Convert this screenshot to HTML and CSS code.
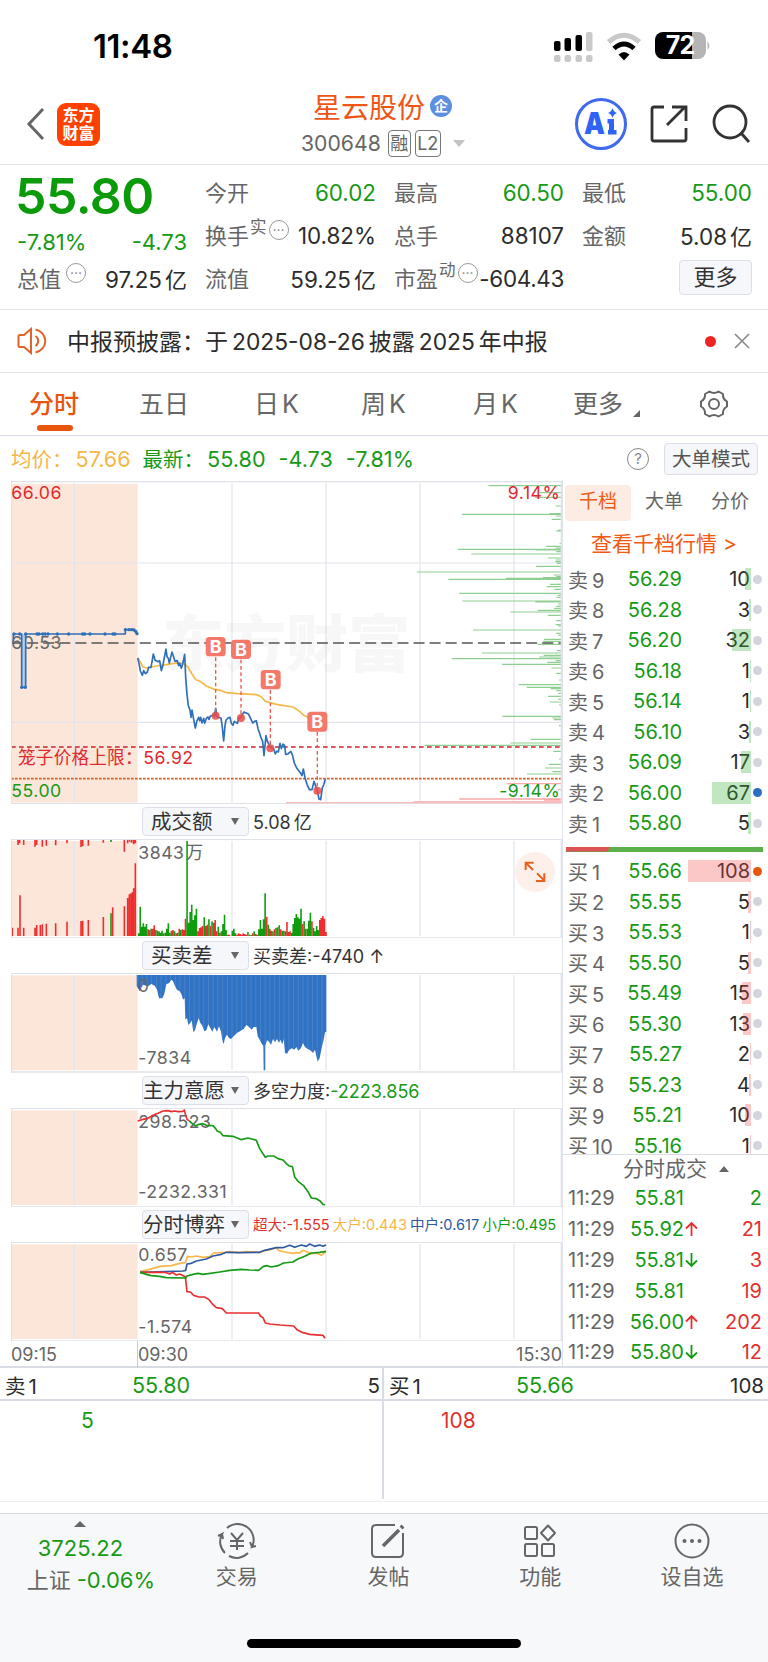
FILE: index.html
```html
<!DOCTYPE html>
<html lang="zh-CN">
<head>
    <meta charset="UTF-8">
    <title>星云股份 300648</title>
    <link rel="stylesheet" href="styles.css">
</head>
<body>
    <div class="status-bar">
        <span class="clock">11:48</span>
        <svg class="status-icons" width="160" height="42" viewBox="0 0 160 42">
            <g fill="#000">
                <rect x="3" y="14" width="6.500" height="10" rx="2"/>
                <rect x="13.500" y="11" width="6.500" height="13" rx="2"/>
                <rect x="24.500" y="8" width="6.500" height="16" rx="2"/>
            </g>
            <g fill="#c9c9c9">
                <rect x="35" y="5" width="6.500" height="19" rx="2"/>
                <rect x="3" y="28" width="6.500" height="7" rx="2"/>
                <rect x="13.500" y="28" width="6.500" height="7" rx="2"/>
                <rect x="24.500" y="28" width="6.500" height="7" rx="2"/>
                <rect x="35" y="28" width="6.500" height="7" rx="2"/>
            </g>
            <path d="M57.500 15 Q73 1.500 88.500 15" fill="none" stroke="#c9c9c9" stroke-width="5"/>
            <path d="M63 21.500 Q73 12.500 83 21.500" fill="none" stroke="#000" stroke-width="5"/>
            <path d="M67.500 27.500 Q73 22.500 78.500 27.500 L73 33.500 Z" fill="#000"/>
            <path d="M112 5h29v27h-29a8 8 0 0 1-8-8v-11a8 8 0 0 1 8-8z" fill="#000"/>
            <path d="M141 5h6a8 8 0 0 1 8 8v11a8 8 0 0 1-8 8h-6z" fill="#b5b5b5"/>
            <path d="M156.500 14q3.500 4.500 0 9z" fill="#b5b5b5"/>
            <text x="129" y="27" class="battery">72</text>
        </svg>
    </div>

    <header class="header">
        <svg class="back" width="20" height="34" viewBox="0 0 20 34"><path d="M17 2 L3 17 L17 32" fill="none" stroke="#666" stroke-width="3"/></svg>
        <div class="logo">东方<br>财富</div>
        <div class="title">
            <div class="stock-name">星云股份<span class="corp">企</span></div>
            <div class="stock-code">300648<span class="tag">融</span><span class="tag tag-l2">L2</span><i class="tri-down"></i></div>
        </div>
        <div class="actions">
            <svg width="54" height="54" viewBox="0 0 54 54">
                <circle cx="27" cy="27" r="24.500" fill="#fff" stroke="#3f69ee" stroke-width="3"/>
                <text x="10" y="37" class="ai-text" textLength="21" lengthAdjust="spacingAndGlyphs">A</text>
                <path d="M33.500 22h6.500v11h2.500v4.500h-8.500v-4.500h1v-6.500h-1.500z" fill="#2f63f5"/>
                <path d="M38.500 11q1 4 4.500 5q-3.500 1-4.500 5q-1-4-4.500-5q3.500-1 4.500-5z" fill="#2f63f5"/>
            </svg>
            <svg class="share" width="38" height="38" viewBox="0 0 38 38" fill="none" stroke="#333" stroke-width="2.800">
                <path d="M14 2H4Q2 2 2 4V34Q2 36 4 36H34Q36 36 36 34V23"/><path d="M17 20L35 2M22 2H36V16"/>
            </svg>
            <svg class="search" width="40" height="40" viewBox="0 0 40 40" fill="none" stroke="#333" stroke-width="2.800">
                <circle cx="18" cy="18" r="16"/><path d="M29 29L37 38"/>
            </svg>
        </div>
    </header>

    <section class="quote">
        <div class="cell big-price">55.80</div>
        <div class="cell"><label>今开</label><b class="green">60.02</b></div>
        <div class="cell"><label>最高</label><b class="green">60.50</b></div>
        <div class="cell"><label>最低</label><b class="green">55.00</b></div>
        <div class="cell change green"><span>-7.81%</span><span>-4.73</span></div>
        <div class="cell"><label>换手<sup>实</sup><i class="dots">···</i></label><b>10.82%</b></div>
        <div class="cell"><label>总手</label><b>88107</b></div>
        <div class="cell"><label>金额</label><b>5.08<em>亿</em></b></div>
        <div class="cell"><label>总值<i class="dots gap">···</i></label><b>97.25<em>亿</em></b></div>
        <div class="cell"><label>流值</label><b>59.25<em>亿</em></b></div>
        <div class="cell"><label>市盈<sup>动</sup><i class="dots">···</i></label><b class="tight">-604.43</b></div>
        <div class="cell more-cell"><button class="more">更多</button></div>
    </section>

    <section class="notice">
        <svg width="32" height="28" viewBox="0 0 32 28" fill="none" stroke="#e0632a" stroke-width="2">
            <path d="M14 2L7 8H3Q1.500 8 1.500 9.500V18.500Q1.500 20 3 20H7L14 26ZM18.500 9a6 6 0 0 1 0 10M18.500 2.500a12 11.700 0 0 1 0 23"/>
        </svg>
        <p>中报预披露：于<span>2025-08-26</span>披露<span>2025</span>年中报</p>
        <i class="red-dot"></i>
        <svg width="16" height="16" viewBox="0 0 16 16" stroke="#888" stroke-width="1.600"><path d="M1 1L15 15M15 1L1 15"/></svg>
    </section>

    <nav class="tabs">
        <span class="active">分时</span><span>五日</span><span>日<em>K</em></span><span>周<em>K</em></span><span>月<em>K</em></span><span class="tab-more">更多</span>
        <svg width="32" height="32" viewBox="0 0 32 32" fill="none" stroke="#666" stroke-width="2">
            <path d="M11.500 3.500Q16 6.500 20.500 3.500L25 6Q24.500 11 29 13.500V18.500Q24.500 21 25 26L20.500 28.500Q16 25.500 11.500 28.500L7 26Q7.500 21 3 18.500V13.500Q7.500 11 7 6Z" stroke-linejoin="round"/><circle cx="16" cy="16" r="5"/>
        </svg>
    </nav>

    <section class="info">
        <span class="yellow">均价：</span><b class="yellow v1">57.66</b>
        <span class="green">最新：</span><b class="green v2">55.80</b><b class="green v3">-4.73</b><b class="green">-7.81%</b>
        <i class="help">?</i>
        <button>大单模式</button>
    </section>

    <main class="board">
        <div class="charts">
            <svg class="chart main-chart" viewBox="34 31 1653 969">
                <rect x="34" y="39" width="380" height="957" class="auction"/>
                <path class="grid" d="M224 37V995M697 37V995M979 37V995M1261 37V995M1543 37V995M34 277H1685M34 755H1685"/>
                <text x="488" y="588" class="watermark">东方财富</text>
                <path id="sellDepth" stroke="#8fce91" stroke-width="3.500"/>
                <path id="buyDepth" stroke="#fba8a8" stroke-width="4"/>
                <path d="M34 517H1685" stroke="#555" stroke-width="5" stroke-dasharray="33 15.300"/>
                <path d="M34 829H1685" stroke="#c9252b" stroke-width="5" stroke-dasharray="14 10"/>
                <path d="M34 924H1685" stroke="#cf6428" stroke-width="5" stroke-dasharray="8 4"/>
                <g class="axis">
                    <text x="35" y="85" fill="#e02a2e">66.06</text>
                    <text x="35" y="534">60.53</text>
                    <text x="35" y="980" fill="#169a16">55.00</text>
                    <text x="1682" y="85" fill="#e02a2e" text-anchor="end">9.14%</text>
                    <text x="1682" y="980" fill="#169a16" text-anchor="end">-9.14%</text>
                    <text x="55" y="881" fill="#e02a2e" class="cage">笼子价格上限：</text>
                    <text x="431" y="881" fill="#e02a2e">56.92</text>
                </g>
                <rect x="66" y="490" width="12" height="160" fill="#b9cfe6"/>
                <path class="blue-line" d="M41 515V490H66V650H78V490H377V477H402L413 490"/>
                <g id="auctionDots" fill="#2f6fb8"></g>
                <path fill="none" stroke="#f2b848" stroke-width="5" d="M414 562L421 572 429 588 440 592 470 586 505 581 530 577 550 578 564 588 577 610 588 627 600 631 620 646 645 656 665 660 680 666 715 669 770 672 785 678 797 692 830 701 880 709 900 722 912 734 935 744 955 752 965 768"/>
                <path class="blue-line" d="M414 562L418 578 422 601 428 614 432 600 437 609 443 604 447 590 454 590 461 550 466 568 475 573 480 570 485 600 490 582 499 535 502 558 506 563 509 577 512 564 517 544 522 559 526 572 533 570 537 585 540 578 545 593 549 580 555 551 558 620 562 671 566 705 571 718 574 740 577 718 582 746 587 772 592 750 597 740 600 750 603 740 607 757 612 743 615 758 620 743 625 739 628 746 632 736 640 734 644 737 648 713 652 738 657 740 664 742 668 770 672 811 676 765 679 748 685 742 691 740 695 758 700 764 704 752 708 755 713 758 719 740 724 742 728 732 733 724 740 727 747 731 753 744 759 757 765 752 770 750 775 774 780 788 784 801 789 812 793 855 799 795 803 812 812 829 822 835 827 850 831 842 836 844 841 818 845 834 850 820 855 825 858 851 864 850 868 847 873 842 878 852 884 877 891 892 898 901 903 908 907 915 911 895 916 921 922 941 929 957 937 957 943 932 948 946 954 965 958 985 963 987 968 951 972 943 977 925"/>
                <g fill="none" stroke="#f0564e" stroke-width="4" stroke-dasharray="11 8">
                    <path d="M648 560V735M724 567V742M812 658V833M953 784V960"/>
                </g>
                <g fill="#e84c48" fill-opacity=".85"><circle cx="648" cy="735" r="12"/><circle cx="724" cy="742" r="12"/><circle cx="812" cy="833" r="12"/><circle cx="953" cy="960" r="12"/></g>
                <g class="marks">
                    <rect x="618" y="499" width="60" height="58" rx="11"/><text x="648" y="547">B</text>
                    <rect x="694" y="507" width="60" height="58" rx="11"/><text x="724" y="555">B</text>
                    <rect x="783" y="598" width="60" height="58" rx="11"/><text x="813" y="646">B</text>
                    <rect x="923" y="723" width="60" height="60" rx="11"/><text x="953" y="772">B</text>
                </g>
                <path class="frame" d="M34 33H1685M35 31V1000M1685 31V1000M34 999H1685"/>
                <path d="M859 996H1685M1242 993H1685" stroke="#f9bcbc" stroke-width="4"/>
            </svg>

            <div class="picker"><button class="pad">成交额</button><span>5.08<em>亿</em></span></div>
            <svg class="chart" viewBox="34 147 1653 298">
                <rect x="34" y="153" width="380" height="285" class="auction"/>
                <path class="grid" d="M224 153V438M697 153V438M979 153V438M1261 153V438M1543 153V438"/>
                <text x="416" y="206" class="label">3843<tspan dx="4">万</tspan></text>
                <path id="volUp" stroke="#ee2e2e" stroke-width="4.800"/>
                <path id="volDown" stroke="#0f9d0f" stroke-width="4.800"/>
                <path class="frame" d="M34 148H1685M34 444H1685M35 148V444M1685 147V445"/>
                <circle cx="1606" cy="246" r="60" fill="#fdf0ea"/>
                <path d="M1600 240L1578 218M1578 240V218H1602M1612 250L1634 272M1634 250V273H1609" fill="none" stroke="#e8611d" stroke-width="6"/>
            </svg>

            <div class="picker"><button class="pad">买卖差</button><span>买卖差:-4740 ↑</span></div>
            <svg class="chart" viewBox="34 550 1653 298">
                <defs><pattern id="bars" width="14.200" height="20" patternUnits="userSpaceOnUse"><rect width="15" height="20" fill="#3073c4"/><rect width="1.500" height="20" fill="#5d8fcb"/></pattern></defs>
                <rect x="34" y="557" width="380" height="285" class="auction"/>
                <path class="grid" d="M224 557V842M697 557V842M979 557V842M1261 557V842M1543 557V842"/>
                <polygon fill="url(#bars)" points="411,556 411,590 420,604 430,585 445,590 455,583 465,588 472,600 478,626 488,626 494,612 500,584 508,580 516,570 520,575 526,590 532,600 540,605 546,615 550,630 555,625 557,690 562,685 566,706 572,700 576,692 581,728 586,722 592,700 597,686 602,700 608,708 614,725 620,722 626,704 632,715 638,726 644,712 652,726 658,710 664,726 668,752 672,764 676,745 682,735 688,745 694,748 702,740 712,730 722,724 732,718 740,706 748,712 756,720 762,712 770,712 774,740 780,750 786,762 791,768 792,842 797,842 797,768 802,752 808,756 814,766 820,748 826,758 832,748 838,760 842,750 848,764 852,748 856,790 862,792 868,782 876,776 884,780 890,772 896,784 904,775 910,760 916,772 924,778 932,782 940,790 946,780 950,800 954,816 960,805 966,775 972,750 976,728 980,726 980,556"/>
                <text x="414" y="608" class="label">0</text>
                <text x="416" y="824" class="label">-7834</text>
                <path class="frame" d="M34 551H1685M34 847H1685M35 551V847M1685 550V848"/>
            </svg>

            <div class="picker"><button>主力意愿</button><span>多空力度:<b class="green">-2223.856</b></span></div>
            <svg class="chart" viewBox="34 83 1653 298">
                <rect x="34" y="90" width="380" height="284" class="auction"/>
                <path class="grid" d="M224 90V374M697 90V374M979 90V374M1261 90V374M1543 90V374"/>
                <text x="416" y="142" class="label">298.523</text>
                <text x="416" y="352" class="label">-2232.331</text>
                <path class="line" stroke="#ea2f31" d="M414 122L430 117 445 114 460 105 475 99 490 92 505 91 515 94 525 92 535 94 550 93 554 89 558 105 562 117 568 121"/>
                <path class="line" stroke="#169a16" d="M568 121L578 130 588 137 598 132 610 130 620 135 640 136 648 145 653 153 662 156 670 166 700 168 725 178 745 173 770 180 780 205 797 231 805 227 822 227 835 235 850 239 860 250 868 257 878 259 885 290 895 303 912 316 926 336 935 353 950 355 960 361 970 372 976 374"/>
                <path class="frame" d="M34 84H1685M34 380H1685M35 84V380M1685 83V381"/>
            </svg>

            <div class="picker"><button>分时博弈</button><span class="small"><i class="c-red">超大:-1.555</i><i class="yellow">大户:0.443</i><i class="c-blue">中户:0.617</i><i class="green">小户:0.495</i></span></div>
            <svg class="chart" viewBox="34 486 1653 298">
                <rect x="34" y="493" width="380" height="284" class="auction"/>
                <path class="grid" d="M224 493V777M697 493V777M979 493V777M1261 493V777M1543 493V777"/>
                <text x="416" y="544" class="label">0.657</text>
                <text x="416" y="760" class="label">-1.574</text>
                <path class="line" stroke="#f7b84a" d="M421 575L450 568 480 559 515 557 540 550 557 548 563 529 575 531 590 528 610 532 630 530 642 519 660 518 675 517 690 515 720 518 740 515 780 517 795 512 815 508 830 503 838 512 855 516 880 520 890 518 900 519 910 511 925 517 935 522 950 519 965 526 979 514"/>
                <path class="line" stroke="#2f59a0" d="M421 577L500 575 550 573 558 571 562 552 575 550 590 543 620 537 640 528 665 523 680 517 720 518 780 517 795 511 830 503 850 503 870 496 885 502 905 495 920 499 930 492 945 499 960 495 970 499 979 495"/>
                <path class="line" stroke="#ea2f31" d="M421 577L495 577 510 582 518 577 530 585 540 582 557 590 562 635 572 636 582 646 598 651 615 651 628 659 640 674 650 683 668 686 680 699 777 699 782 708 790 713 797 729 810 732 840 735 882 738 892 749 910 758 930 763 970 766 976 775"/>
                <path class="line" stroke="#169a16" d="M421 577L440 583 455 587 480 589 500 593 558 594 562 588 580 583 595 580 610 583 660 576 690 571 725 568 750 570 777 571 790 560 800 557 815 561 835 557 852 549 880 546 893 538 915 529 935 519 960 517 979 514"/>
                <path class="frame" d="M34 487H1685M34 783H1685M35 487V783M1685 486V784"/>
            </svg>
            <div class="times"><span class="t1">09:15</span><span class="t2">09:30</span><span class="t3">15:30</span></div>
        </div>

        <aside class="book">
            <div class="book-tabs"><span class="on">千档</span><span>大单</span><span>分价</span></div>
            <a class="link">查看千档行情 &gt;</a>
            <div id="sells"></div>
            <div class="ratio"><i></i></div>
            <div id="buys" class="buys"></div>
            <div class="deal-title">分时成交<i class="tri-up"></i></div>
            <div id="deals"></div>
        </aside>
    </main>

    <section class="level">
        <div class="half">
            <div class="level-head"><span>卖<em>1</em></span><b>55.80</b><span class="num">5</span></div>
            <div class="queue green">5</div>
        </div>
        <div class="half">
            <div class="level-head"><span>买<em>1</em></span><b>55.66</b><span class="num">108</span></div>
            <div class="queue c-red">108</div>
        </div>
    </section>

    <footer class="bottom">
        <div class="index">
            <i class="tri-up"></i>
            <div class="green">3725.22</div>
            <div class="rate">上证<b class="green">-0.06%</b></div>
        </div>
        <div class="item">
            <svg width="40" height="36" viewBox="0 0 40 36" fill="none" stroke="#666" stroke-width="2">
                <path d="M8 30A16 16 0 0 1 5 11L1 13M5 11L6 16M10 5A16 16 0 0 1 35 24L39 23M35 24L33 19M31 30A16 16 0 0 1 12 33"/>
                <path d="M14 10L20 17L26 10M20 17V27M13 18H27M13 23H27"/>
            </svg>
            交易
        </div>
        <div class="item">
            <svg width="36" height="36" viewBox="0 0 36 36" fill="none" stroke="#666" stroke-width="2">
                <path d="M25 2H6Q2 2 2 6V30Q2 34 6 34H29Q33 34 33 30V10"/><path d="M13 23L29 7" stroke-width="3.500"/><path d="M31 5L33 3" stroke-width="4"/>
            </svg>
            发帖
        </div>
        <div class="item">
            <svg width="36" height="36" viewBox="0 0 36 36" fill="none" stroke="#666" stroke-width="2">
                <rect x="3" y="4" width="12" height="12" rx="1.500"/><rect x="3" y="21" width="12" height="12" rx="1.500"/><rect x="20" y="21" width="12" height="12" rx="1.500"/><path d="M26 2.500L33 10L26 17.500L19 10Z" stroke-linejoin="round"/>
            </svg>
            功能
        </div>
        <div class="item">
            <svg width="36" height="36" viewBox="0 0 36 36" fill="none" stroke="#666" stroke-width="2">
                <circle cx="18" cy="18" r="16.500"/><g fill="#666" stroke="none"><circle cx="10.500" cy="18" r="2"/><circle cx="18" cy="18" r="2"/><circle cx="25.500" cy="18" r="2"/></g>
            </svg>
            设自选
        </div>
        <i class="home-bar"></i>
    </footer>
    <script src="script.js"></script>
</body>
</html>
```
FILE: styles.css
```css
* {
    box-sizing: border-box;
}

body {
    margin: 0;
    width: 768px;
    height: 1662px;
    overflow: hidden;
    background: #fff;
    color: #2b2b2b;
    font-family: Inter, "Noto Sans CJK SC", sans-serif;
    font-size: 22px;
}

i, em {
    font-style: normal;
}

b {
    font-weight: 400;
}

button {
    font-family: inherit;
    color: #333;
    background: #f6f7fa;
    border: 1px solid #dcdfe8;
    border-radius: 4px;
    padding: 0;
}

.green { color: #169a16; }
.yellow { color: #f5b647; }
.c-red { color: #e2302f; }
.c-blue { color: #2f59a0; }

/* status bar */
.status-bar {
    height: 82px;
    display: flex;
    justify-content: space-between;
    padding: 27px 57px 0 93px;
}

.clock {
    font-size: 33px;
    font-weight: 600;
    line-height: 38px;
    color: #000;
    letter-spacing: -0.4px;
}

.battery {
    font-size: 25px;
    font-weight: 700;
    fill: #fff;
    text-anchor: middle;
    letter-spacing: -1px;
}

/* header */
.header {
    height: 83px;
    display: flex;
    align-items: center;
    border-bottom: 1px solid #e4e4e8;
    padding: 2px 16px 0 26px;
}

.logo {
    width: 43px;
    height: 43px;
    margin-left: 11px;
    border-radius: 9px;
    background: #fe4100;
    color: #fff;
    font-size: 16px;
    font-weight: 700;
    line-height: 18px;
    text-align: center;
    padding-top: 3px;
}

.title {
    width: 172px;
    margin-left: 201px;
    padding-top: 6px;
}

.stock-name {
    display: flex;
    align-items: center;
    height: 32px;
    margin-left: 12px;
    font-size: 28px;
    color: #ee5518;
    white-space: nowrap;
}

.corp {
    width: 22px;
    height: 22px;
    margin-left: 5px;
    border-radius: 50%;
    background: #5e8ee0;
    color: #fff;
    font-size: 14px;
    font-weight: 700;
    line-height: 21px;
    text-align: center;
}

.stock-code {
    display: flex;
    align-items: center;
    height: 42px;
    color: #666;
    font-size: 21.2px;
}

.tag {
    width: 23px;
    height: 27px;
    margin-left: 7px;
    border: 1px solid #777;
    border-radius: 4px;
    font-size: 18px;
    line-height: 25px;
    text-align: center;
}

.tag-l2 {
    width: 26px;
    margin-left: 4px;
}

.tri-down {
    margin-left: 12px;
    border: 6px solid transparent;
    border-top: 7px solid #c4c4c4;
    border-bottom: 0;
}

.actions {
    display: flex;
    align-items: center;
    margin-left: auto;
}

.share { margin-left: 22px; }
.search { margin-left: 24px; }

.ai-text {
    font-size: 30px;
    font-weight: 900;
    fill: #2f63f5;
}

/* quote */
.quote {
    height: 145px;
    padding: 6px 16px 0 17px;
    border-bottom: 1px solid #e4e4e8;
    display: grid;
    grid-template-columns: 170px 171px 170px 170px;
    grid-template-rows: repeat(3, 43px);
    column-gap: 18px;
}

.cell {
    display: flex;
    align-items: center;
    justify-content: space-between;
    white-space: nowrap;
}

.cell label {
    display: flex;
    align-items: center;
    margin-top: -3px;
    color: #666;
}

.cell b {
    margin-top: -1px;
    font-size: 22.4px;
}

.cell .tight {
    letter-spacing: -0.3px;
}

.cell em {
    margin-left: 3px;
    font-size: 22px;
}

.cell sup {
    font-size: 16.5px;
    margin: 0 2px 14px 1px;
    line-height: 16px;
}

.big-price {
    color: #0a9a0a;
    font-size: 50px;
    font-weight: 600;
    letter-spacing: -0.5px;
    padding-top: 7px;
    margin-left: -2px;
}

.change {
    padding-top: 13px;
}

.dots {
    width: 20px;
    height: 20px;
    margin-bottom: 8px;
    border: 1.5px solid #999;
    border-radius: 50%;
    color: #888;
    font-size: 14px;
    line-height: 17px;
    text-align: center;
}

.dots.gap {
    margin-left: 5px;
}

.more-cell {
    justify-content: flex-end;
}

.more {
    width: 73px;
    height: 35px;
    margin-top: -2px;
    font-size: 22px;
    line-height: 31px;
}

/* notice */
.notice {
    height: 63px;
    display: flex;
    align-items: center;
    padding: 0 18px 0 17px;
    border-bottom: 1px solid #e4e4e8;
    font-size: 23px;
}

.notice p {
    margin: -3px auto 0 18px;
}

.notice p span {
    margin: 0 4px;
    font-size: 22.8px;
}

.red-dot {
    width: 11px;
    height: 11px;
    margin-right: 18px;
    border-radius: 50%;
    background: #f02424;
}

/* tabs */
.tabs {
    height: 63px;
    display: flex;
    align-items: center;
    padding-left: 29px;
    border-bottom: 1px solid #d8dae4;
    color: #666;
    font-size: 25px;
}

.tabs span {
    position: relative;
    width: 110px;
    height: 62px;
    line-height: 62px;
}

.tabs span:nth-child(2) { width: 115px; }
.tabs span:nth-child(3) { width: 107px; }
.tabs span:nth-child(4) { width: 112px; }
.tabs span:nth-child(5) { width: 100px; }
.tabs .tab-more { width: 125px; }

.tabs em {
    margin-left: 3px;
}

.tabs .active {
    color: #e8560e;
    font-weight: 500;
}

.tabs .active::after {
    content: "";
    position: absolute;
    left: 8px;
    bottom: 4px;
    width: 36px;
    height: 6px;
    border-radius: 3px;
    background: #e8560e;
}

.tab-more::after {
    content: "";
    position: absolute;
    left: 60px;
    top: 37px;
    border-left: 7px solid transparent;
    border-bottom: 7px solid #666;
}

/* average / last price line */
.info {
    height: 44px;
    display: flex;
    align-items: center;
    padding: 2px 10px 0 11px;
    font-size: 20.5px;
}

.info > span {
    margin-top: -2px;
}

.info b { font-size: 21.6px; }
.info .v1 { margin: 0 12px 0 3px; }
.info .v2 { margin: 0 13px 0 3px; }
.info .v3 { margin-right: 13px; }

.help {
    width: 22px;
    height: 22px;
    margin: 0 15px 0 auto;
    border: 1.5px solid #888;
    border-radius: 50%;
    color: #888;
    font-size: 15px;
    line-height: 19px;
    text-align: center;
}

.info button {
    width: 94px;
    height: 32px;
    font-size: 19.5px;
    line-height: 28px;
    color: #555;
}

/* charts */
.board {
    display: flex;
    height: 888px;
    border-bottom: 2px solid #dadce3;
}

.charts {
    width: 551px;
    margin-left: 11px;
    padding-top: 1px;
}

.chart {
    display: block;
    width: 551px;
    height: 99.33px;
}

.main-chart {
    height: 323px;
}

.auction { fill: #fce6da; }
.grid { stroke: #e2e3ec; stroke-width: 3.5; }
.frame { stroke: #e0e2ea; stroke-width: 4; }
.watermark { font-size: 186px; font-weight: 900; fill: #888; fill-opacity: 0.07; }
.blue-line { fill: none; stroke: #2f6fb8; stroke-width: 5; stroke-linejoin: round; }
.line { fill: none; stroke-width: 5; stroke-linejoin: round; }

.axis text,
.label {
    font-size: 53px;
    letter-spacing: 1.5px;
}

.axis .cage { letter-spacing: 0.5px; }

.axis text:not([fill]),
.label {
    fill: #666;
}

.marks rect { fill: #f4796b; }
.marks text {
    fill: #fff;
    font-size: 54px;
    font-weight: 700;
    text-anchor: middle;
}

.picker {
    height: 35px;
    display: flex;
    align-items: center;
    padding-left: 131px;
    font-size: 18px;
    color: #333;
    white-space: nowrap;
}

.picker span {
    margin-top: -1px;
}

.picker button {
    position: relative;
    width: 107px;
    height: 29px;
    flex: none;
    font-size: 20.5px;
    line-height: 25px;
    text-align: left;
    margin-right: 4px;
}

.picker .pad {
    padding-left: 8px;
}

.picker button::after {
    content: "";
    position: absolute;
    left: 88px;
    top: 10px;
    border: 4px solid transparent;
    border-top: 7px solid #666;
    border-bottom: 0;
}

.picker em { margin-left: 3px; }
.picker .small { font-size: 14.6px; }
.picker .small i { margin-right: 3px; }

.times {
    display: flex;
    height: 27px;
    align-items: center;
    font-size: 18px;
    color: #666;
}

.times .t1 {
    width: 127px;
    border-right: 1px solid #c9cbd3;
    line-height: 27px;
}

.times .t3 { margin-left: auto; }

/* order book */
.book {
    width: 206px;
    padding-top: 5px;
    border-left: 1px solid #e2e3ea;
}

.book-tabs {
    display: flex;
    height: 36px;
    font-size: 19px;
    line-height: 34px;
    color: #666;
    text-align: center;
}

.book-tabs span { width: 66px; }

.book-tabs .on {
    margin-left: 2px;
    border-radius: 4px;
    background: #fdece4;
    color: #f05a14;
}

.link {
    display: block;
    height: 43px;
    padding-left: 28px;
    font-size: 21px;
    line-height: 45px;
    color: #f05a14;
    white-space: nowrap;
}

.order {
    display: flex;
    align-items: center;
    height: 30.5px;
    padding: 0 6px 0 5px;
    font-size: 20px;
}

.order .name { width: 52px; color: #666; white-space: nowrap; }
.order .name em { margin-left: 4px; }
.order .price { width: 62px; text-align: right; }

.order .qty {
    position: relative;
    flex: 1;
    padding-right: 1px;
    text-align: right;
    line-height: 22px;
}

.order .qty i {
    position: absolute;
    right: 0;
    top: 0;
    height: 22px;
    background: rgba(60, 180, 60, 0.32);
}

.buys .qty i { background: rgba(245, 70, 70, 0.3); }

.order .dot {
    width: 9px;
    height: 9px;
    margin-left: 2px;
    border-radius: 50%;
    background: #d2d5dc;
}

.order .dot.blue { background: #2b6cc4; }
.order .dot.orange { background: #e8560e; }

.ratio {
    width: 197px;
    height: 5px;
    margin: 8px 0 4.5px 3px;
    background: #5bb04b;
}

.ratio i {
    display: block;
    width: 44px;
    height: 5px;
    background: #dd5252;
    clip-path: polygon(0 0, 100% 0, 94% 100%, 0 100%);
}

.buys {
    height: 299px;
    overflow: hidden;
    border-bottom: 1px solid #dcdee6;
}

.deal-title {
    height: 28px;
    padding-left: 60px;
    font-size: 21px;
    line-height: 27px;
    color: #666;
}

.tri-up {
    display: inline-block;
    border: 5px solid transparent;
    border-bottom: 6px solid #666;
    border-top: 0;
}

.deal-title .tri-up {
    margin: 0 0 4px 12px;
}

.deal {
    display: flex;
    align-items: center;
    height: 30.8px;
    padding: 0 6px 0 5px;
    font-size: 20px;
}

.deal .time { width: 56px; color: #666; }
.deal .price { width: 60px; text-align: right; }
.deal svg { margin-left: 1px; }
.deal .vol { margin-left: auto; }

/* level 2 queue */
.level {
    display: flex;
    height: 134px;
    border-bottom: 1px solid #eeeef2;
}

.half {
    width: 384px;
    height: 131px;
}

.half:first-child {
    border-right: 2px solid #dadce3;
}

.level-head {
    display: flex;
    height: 33px;
    padding: 3px 4px 0 5px;
    align-items: center;
    border-bottom: 2px solid #dadce3;
    font-size: 20.5px;
}

.half:first-child .level-head { padding-right: 2px; }

.level-head span { width: 127px; }
.level-head em { margin-left: 3px; }
.level-head b { color: #169a16; font-size: 21.5px; }
.level-head .num { margin-left: auto; text-align: right; }

.queue {
    padding: 7px 0 0 81px;
    font-size: 21px;
}

.half + .half .queue { padding-left: 57px; }

/* bottom bar */
.bottom {
    position: relative;
    display: flex;
    height: 151px;
    margin-top: 11px;
    padding-top: 9px;
    border-top: 1px solid #d6d8e0;
    background: #f7f8fa;
    font-size: 21px;
    color: #666;
}

.index {
    width: 161px;
    font-size: 22px;
    text-align: center;
    line-height: 32px;
    white-space: nowrap;
}

.index .tri-up {
    display: block;
    width: 12px;
    margin: -2px auto 5px;
    border-width: 0 6px 6px;
}

.rate { padding-left: 21px; }
.rate b { margin-left: 6px; }

.item {
    width: 152px;
    display: flex;
    flex-direction: column;
    align-items: center;
    line-height: 36px;
}

.home-bar {
    position: absolute;
    left: 247px;
    bottom: 16px;
    width: 274px;
    height: 9px;
    border-radius: 5px;
    background: #000;
}
```
FILE: script.js
```js
// name, price, volume, bar width, dot colour
const sells = [
    [9, '56.29', 10, 6], [8, '56.28', 3, 2], [7, '56.20', 32, 19],
    [6, '56.18', 1, 0.7], [5, '56.14', 1, 0.7], [4, '56.10', 3, 2],
    [3, '56.09', 17, 10], [2, '56.00', 67, 39, 'blue'], [1, '55.80', 5, 3]
];
const buys = [
    [1, '55.66', 108, 63, 'orange'], [2, '55.55', 5, 3], [3, '55.53', 1, 0.7],
    [4, '55.50', 5, 3], [5, '55.49', 15, 9], [6, '55.30', 13, 8],
    [7, '55.27', 2, 1], [8, '55.23', 4, 2], [9, '55.21', 10, 6], [10, '55.16', 1, 0.7]
];
const deals = [
    ['55.81', '', 2, 'green'], ['55.92', 'up', 21, 'c-red'], ['55.81', 'down', 3, 'c-red'],
    ['55.81', '', 19, 'c-red'], ['56.00', 'up', 202, 'c-red'], ['55.80', 'down', 12, 'c-red']
];

function orderRows(side, list) {
    return list.map(r => `<div class="order">
        <span class="name">${side}<em>${r[0]}</em></span>
        <span class="price green">${r[1]}</span>
        <span class="qty">${r[2]}<i style="width:${r[3]}px"></i></span>
        <span class="dot ${r[4] || ''}"></span></div>`).join('');
}

function arrow(dir) {
    if (!dir) return '';
    const up = dir === 'up';
    const d = up ? 'M6.500 15V2M1 7.500L6.500 2L12 7.500' : 'M6.500 1V14M1 8.500L6.500 14L12 8.500';
    return `<svg width="13" height="16" fill="none" stroke="${up ? '#e2302f' : '#169a16'}" stroke-width="1.800"><path d="${d}"/></svg>`;
}

document.getElementById('sells').innerHTML = orderRows('卖', sells);
document.getElementById('buys').innerHTML = orderRows('买', buys);
document.getElementById('deals').innerHTML = deals.map(r => `<div class="deal">
    <span class="time">11:29</span><span class="price green">${r[0]}</span>${arrow(r[1])}
    <span class="vol ${r[3]}">${r[2]}</span></div>`).join('');

// depth lines on the right edge: y, left x
const sellDepth = [
    [45, 1466], [66, 1620], [80, 1606], [106, 1668], [131, 1387], [129, 1650], [136, 1668], [146, 1656],
    [178, 1676], [181, 1669], [218, 1680], [227, 1639], [232, 1668], [236, 1374], [238, 1608], [243, 1670],
    [250, 1415], [262, 1645], [268, 1668], [273, 1667], [278, 1671], [287, 1609], [304, 1252], [313, 1663],
    [318, 1670], [323, 1519], [326, 1346], [321, 1630], [341, 1651], [348, 1641], [356, 1664], [368, 1379],
    [374, 1674], [380, 1671], [391, 1388], [394, 1607], [400, 1675], [407, 1670], [413, 1663], [419, 1614],
    [424, 1532], [434, 1645], [450, 1670], [462, 1668], [466, 1675], [478, 1420], [488, 1670], [494, 1676],
    [506, 1633], [512, 1631], [521, 1614], [540, 1672], [547, 1447], [554, 1632], [559, 1619], [564, 1356],
    [570, 1668], [575, 1643], [581, 1507], [592, 1655], [608, 1670], [628, 1678], [642, 1557], [650, 1581],
    [654, 1653], [660, 1670], [668, 1676], [677, 1645], [686, 1676], [694, 1650], [703, 1678], [737, 1508],
    [742, 1658], [747, 1663], [765, 1678], [806, 1593], [817, 1532], [824, 1275], [842, 1661], [865, 1678],
    [881, 1648], [892, 1636], [903, 1658], [910, 1582]
];
const buyDepth = [[939, 1521], [957, 1674], [985, 1379], [988, 1633], [993, 1242]];
const depthPath = list => list.map(p => `M${p[1]} ${p[0]}H1685`).join('');
document.getElementById('sellDepth').setAttribute('d', depthPath(sellDepth));
document.getElementById('buyDepth').setAttribute('d', depthPath(buyDepth));

document.getElementById('auctionDots').innerHTML =
    [[43, 490], [60, 490], [78, 490], [112, 490], [118, 490], [129, 490], [136, 490], [145, 490], [173, 490],
     [207, 490], [249, 490], [255, 490], [271, 490], [316, 490], [340, 490], [346, 490], [377, 477], [388, 477],
     [396, 477], [403, 478], [408, 482], [412, 489], [66, 650], [77, 650]]
        .map(p => `<circle cx="${p[0]}" cy="${p[1]}" r="5"/>`).join('');

// turnover bars: call auction first, then one bar per minute
const auction = [
    [38, 413], [55, 413], [61, 316], [72, 413], [106, 413], [111, 405], [122, 405], [128, 403], [140, 401],
    [168, 400], [202, 395], [244, 393], [249, 392], [266, 390], [311, 381], [339, 352], [374, 349], [384, 324],
    [389, 313], [394, 310], [398, 307], [402, 295], [407, 220]
];
const unmatched = [
    [55, 165], [60, 160], [72, 165], [106, 170], [111, 165], [128, 170], [140, 167], [168, 166], [202, 160],
    [244, 171], [249, 169], [266, 167], [311, 158], [374, 185], [384, 160], [390, 155], [396, 158], [402, 163], [407, 160]
];
const minutes = ('g8 g88 g28 g38 g28 g36 r20 r18 g22 r22 r32 g18 r16 g14 g10 g16 r8 g10 g22 g38 g10 r16 r18 g14 r8 g10 ' +
    'r22 g18 r20 r18 r52 g285 g40 g72 g94 g48 g62 g82 r14 r24 r26 r30 g56 r30 r34 g50 r30 g44 r40 r48 r14 g28 ' +
    'r10 g14 g36 g64 g18 r4 r4 r1 g16 g22 g8 r4 r8 r6 r4 r8 r6 r4 g12 r4 g3 r8 g14 r6 r4 g20 g48 g22 g50 g128 ' +
    'r58 g34 r22 r16 g14 r20 g24 r26 g32 r20 g16 r16 g14 r42 r12 r14 g10 g36 g54 g66 g56 g52 g82 r36 g44 r22 ' +
    'g22 g46 g70 r44 g24 g14 g30 g18 r48 r54 r60 r52 r12').split(' ');

let up = auction.map(p => `M${p[0]} 438V${p[1]}`).join('') + unmatched.map(p => `M${p[0]} 148V${p[1]}`).join('');
let down = 'M334 438V370M334 148V156';
minutes.forEach((m, i) => {
    const bar = `M${417 + i * 562 / (minutes.length - 1)} 438v-${m.slice(1)}`;
    if (m[0] === 'r') up += bar;
    else down += bar;
});
document.getElementById('volUp').setAttribute('d', up);
document.getElementById('volDown').setAttribute('d', down);
```
